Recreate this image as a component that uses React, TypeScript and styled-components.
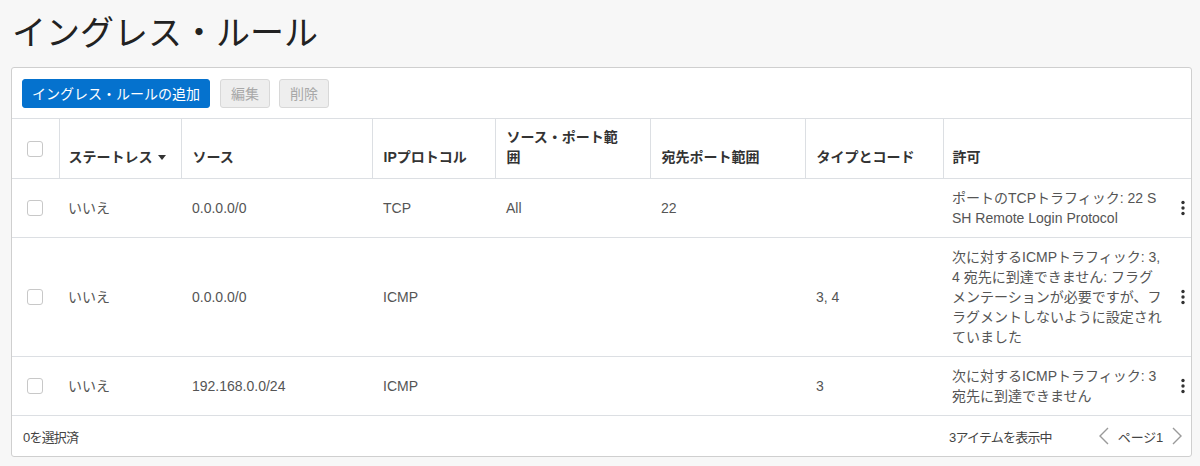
import React from 'react'
import styled, { createGlobalStyle } from 'styled-components'

const GlobalStyle = createGlobalStyle`
  body {
    margin: 0;
    background: #f7f7f7;
    font-family: 'Liberation Sans', 'Noto Sans CJK JP', sans-serif;
    color: #333;
  }
`

type Rule = {
  stateless: string
  source: string
  protocol: string
  srcPort: string
  dstPort: string
  typeCode: string
  allows: string[]
}

const rules: Rule[] = [
  {
    stateless: 'いいえ',
    source: '0.0.0.0/0',
    protocol: 'TCP',
    srcPort: 'All',
    dstPort: '22',
    typeCode: '',
    allows: ['ポートのTCPトラフィック: 22 S', 'SH Remote Login Protocol'],
  },
  {
    stateless: 'いいえ',
    source: '0.0.0.0/0',
    protocol: 'ICMP',
    srcPort: '',
    dstPort: '',
    typeCode: '3, 4',
    allows: [
      '次に対するICMPトラフィック: 3,',
      '4 宛先に到達できません: フラグ',
      'メンテーションが必要ですが、フ',
      'ラグメントしないように設定され',
      'ていました',
    ],
  },
  {
    stateless: 'いいえ',
    source: '192.168.0.0/24',
    protocol: 'ICMP',
    srcPort: '',
    dstPort: '',
    typeCode: '3',
    allows: ['次に対するICMPトラフィック: 3', '宛先に到達できません'],
  },
]

const Page = styled.div`
  padding: 0 8px 0 11px;
`

const Title = styled.h1`
  margin: 0;
  height: 67px;
  display: flex;
  align-items: center;
  padding: 0 0 6px 1px;
  box-sizing: border-box;
  font-family: 'Noto Sans CJK JP', sans-serif;
  font-weight: 400;
  font-size: 34px;
  color: #222;
`

const Panel = styled.div`
  background: #fff;
  border: 1px solid #cfcfcf;
  border-radius: 3px;
  overflow: hidden;
`

const Toolbar = styled.div`
  display: flex;
  gap: 9px;
  padding: 10px;
  height: 51px;
  box-sizing: border-box;
  align-items: center;
  border-bottom: 1px solid #dcdfe3;
`

const Button = styled.button<{ $primary?: boolean }>`
  height: 29px;
  padding: 0 ${(p) => (p.$primary ? '9px' : '10px')};
  border-radius: 3px;
  font-family: 'Noto Sans CJK JP', sans-serif;
  font-size: 14px;
  border: 1px solid ${(p) => (p.$primary ? '#0572ce' : '#d8d8d8')};
  background: ${(p) => (p.$primary ? '#0572ce' : '#eeeeee')};
  color: ${(p) => (p.$primary ? '#fff' : '#a8a8a8')};
  margin-right: ${(p) => (p.$primary ? '1px' : '0')};
`

const Table = styled.table`
  width: 100%;
  border-collapse: collapse;
  table-layout: fixed;
`

const Th = styled.th`
  text-align: left;
  vertical-align: bottom;
  height: 59px;
  padding: 8px 10px 11px 11px;
  box-sizing: border-box;
  font-size: 14px;
  line-height: 20px;
  font-weight: 700;
  color: #333;
  border-left: 1px solid #dcdfe3;
  border-bottom: 1px solid #dcdfe3;
  &:first-child {
    border-left: none;
    vertical-align: middle;
    padding: 0 0 0 15px;
  }
  &:nth-child(2) {
    padding-left: 9px;
  }
  &:last-child {
    padding-left: 9px;
  }
`

const Td = styled.td`
  vertical-align: middle;
  padding: 9px 10px 9px 11px;
  font-size: 14px;
  line-height: 20px;
  color: #555;
  border-bottom: 1px solid #dcdfe3;
  &:first-child {
    padding: 0 0 0 15px;
  }
  &:nth-child(2) {
    padding-left: 9px;
  }
  &:last-child {
    padding-left: 9px;
  }
`

const Check = styled.span`
  display: block;
  width: 16px;
  height: 16px;
  box-sizing: border-box;
  border: 1px solid #c8c8c8;
  border-radius: 3px;
  background: #fff;
`

const SortArrow = styled.span`
  display: inline-block;
  margin-left: 5px;
  width: 0;
  height: 0;
  border-left: 4px solid transparent;
  border-right: 4px solid transparent;
  border-top: 5px solid #333;
  vertical-align: 2px;
`

const AllowCell = styled.div`
  display: flex;
  align-items: center;
  justify-content: space-between;
`

const AllowText = styled.div`
  width: 212px;
`

const Kebab = styled.svg`
  flex: none;
  margin-right: -5px;
`

const Footer = styled.div`
  height: 40px;
  display: flex;
  align-items: center;
  justify-content: space-between;
  padding: 0 8px 0 11px;
  font-size: 13px;
  letter-spacing: -0.8px;
  color: #444;
`

const Pager = styled.div`
  display: flex;
  align-items: center;
  gap: 8px;
`

const Count = styled.span`
  margin-right: 38px;
`

const PageLabel = styled.span`
  letter-spacing: -0.2px;
`

const PageArrow = styled.svg`
  display: block;
`

const KebabIcon = () => (
  <Kebab width='6' height='16' viewBox='0 0 6 16'>
    <circle cx='3' cy='2.5' r='1.7' fill='#333' />
    <circle cx='3' cy='8' r='1.7' fill='#333' />
    <circle cx='3' cy='13.5' r='1.7' fill='#333' />
  </Kebab>
)

const Arrow = ({ dir }: { dir: 'left' | 'right' }) => (
  <PageArrow width='12' height='18' viewBox='0 0 12 18'>
    <path
      d={dir === 'left' ? 'M10 1 L2 9 L10 17' : 'M2 1 L10 9 L2 17'}
      fill='none'
      stroke='#9a9a9a'
      strokeWidth='1.4'
    />
  </PageArrow>
)

const App = () => {
  return (
    <Page>
      <GlobalStyle />
      <Title>イングレス・ルール</Title>
      <Panel>
        <Toolbar>
          <Button $primary>イングレス・ルールの追加</Button>
          <Button>編集</Button>
          <Button>削除</Button>
        </Toolbar>
        <Table>
          <colgroup>
            <col style={{ width: 47 }} />
            <col style={{ width: 122 }} />
            <col style={{ width: 191 }} />
            <col style={{ width: 123 }} />
            <col style={{ width: 155 }} />
            <col style={{ width: 155 }} />
            <col style={{ width: 138 }} />
            <col />
          </colgroup>
          <thead>
            <tr>
              <Th>
                <Check />
              </Th>
              <Th>
                ステートレス
                <SortArrow />
              </Th>
              <Th>ソース</Th>
              <Th>IPプロトコル</Th>
              <Th>
                ソース・ポート範
                <br />囲
              </Th>
              <Th>宛先ポート範囲</Th>
              <Th>タイプとコード</Th>
              <Th>許可</Th>
            </tr>
          </thead>
          <tbody>
            {rules.map((r, i) => (
              <tr key={i}>
                <Td>
                  <Check />
                </Td>
                <Td>{r.stateless}</Td>
                <Td>{r.source}</Td>
                <Td>{r.protocol}</Td>
                <Td>{r.srcPort}</Td>
                <Td>{r.dstPort}</Td>
                <Td>{r.typeCode}</Td>
                <Td>
                  <AllowCell>
                    <AllowText>
                      {r.allows.map((line, j) => (
                        <div key={j}>{line}</div>
                      ))}
                    </AllowText>
                    <KebabIcon />
                  </AllowCell>
                </Td>
              </tr>
            ))}
          </tbody>
        </Table>
        <Footer>
          <span>0を選択済</span>
          <Pager>
            <Count>3アイテムを表示中</Count>
            <Arrow dir='left' />
            <PageLabel>ページ1</PageLabel>
            <Arrow dir='right' />
          </Pager>
        </Footer>
      </Panel>
    </Page>
  )
}

export default App
